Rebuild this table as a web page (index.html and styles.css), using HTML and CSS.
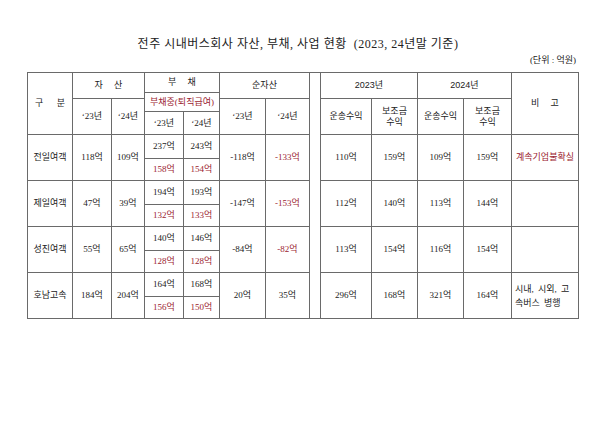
FILE: index.html
```html
<!DOCTYPE html>
<html lang="ko">
<head>
<meta charset="utf-8">
<link rel="stylesheet" href="styles.css">
</head>
<body>
<div class="page">
  <h1 class="title">전주 시내버스회사 자산, 부채, 사업 현황 &nbsp;(2023, 24년말 기준)</h1>
  <div class="unit">(단위 : 억원)</div>
  <table class="grid">
    <colgroup>
      <col class="c-name"><col class="c-a1"><col class="c-a2"><col class="c-d1"><col class="c-d2"><col class="c-n1"><col class="c-n2"><col class="c-gap"><col class="c-r1"><col class="c-s1"><col class="c-r2"><col class="c-s2"><col class="c-note">
    </colgroup>
    <tr class="h1">
      <td rowspan="4" class="spaced">구&nbsp;&nbsp;&nbsp;&nbsp;&nbsp;&nbsp;분</td>
      <td rowspan="2" colspan="2" class="spaced">자&nbsp;&nbsp;&nbsp;&nbsp;&nbsp;산</td>
      <td colspan="2" class="spaced">부&nbsp;&nbsp;&nbsp;&nbsp;&nbsp;채</td>
      <td rowspan="2" colspan="2">순자산</td>
      <td rowspan="12" class="gap"></td>
      <td rowspan="2" colspan="2" class="sans">2023년</td>
      <td rowspan="2" colspan="2" class="sans">2024년</td>
      <td rowspan="4" class="spaced">비&nbsp;&nbsp;&nbsp;&nbsp;&nbsp;고</td>
    </tr>
    <tr class="h2">
      <td rowspan="2" colspan="2" class="red">부채중(퇴직급여)</td>
    </tr>
    <tr class="h3">
      <td rowspan="2">‘23년</td>
      <td rowspan="2">‘24년</td>
      <td rowspan="2">‘23년</td>
      <td rowspan="2">‘24년</td>
      <td rowspan="2">운송수익</td>
      <td rowspan="2">보조금<br>수익</td>
      <td rowspan="2">운송수익</td>
      <td rowspan="2">보조금<br>수익</td>
    </tr>
    <tr class="h4">
      <td>‘23년</td>
      <td>‘24년</td>
    </tr>

    <tr class="top">
      <td rowspan="2">전일여객</td>
      <td rowspan="2">118억</td>
      <td rowspan="2">109억</td>
      <td>237억</td>
      <td>243억</td>
      <td rowspan="2">-118억</td>
      <td rowspan="2" class="red">-133억</td>
      <td rowspan="2">110억</td>
      <td rowspan="2">159억</td>
      <td rowspan="2">109억</td>
      <td rowspan="2">159억</td>
      <td rowspan="2" class="red">계속기업불확실</td>
    </tr>
    <tr class="bot">
      <td class="red">158억</td>
      <td class="red">154억</td>
    </tr>

    <tr class="top">
      <td rowspan="2">제일여객</td>
      <td rowspan="2">47억</td>
      <td rowspan="2">39억</td>
      <td>194억</td>
      <td>193억</td>
      <td rowspan="2">-147억</td>
      <td rowspan="2" class="red">-153억</td>
      <td rowspan="2">112억</td>
      <td rowspan="2">140억</td>
      <td rowspan="2">113억</td>
      <td rowspan="2">144억</td>
      <td rowspan="2"></td>
    </tr>
    <tr class="bot">
      <td class="red">132억</td>
      <td class="red">133억</td>
    </tr>

    <tr class="top">
      <td rowspan="2">성진여객</td>
      <td rowspan="2">55억</td>
      <td rowspan="2">65억</td>
      <td>140억</td>
      <td>146억</td>
      <td rowspan="2">-84억</td>
      <td rowspan="2" class="red">-82억</td>
      <td rowspan="2">113억</td>
      <td rowspan="2">154억</td>
      <td rowspan="2">116억</td>
      <td rowspan="2">154억</td>
      <td rowspan="2"></td>
    </tr>
    <tr class="bot">
      <td class="red">128억</td>
      <td class="red">128억</td>
    </tr>

    <tr class="top">
      <td rowspan="2">호남고속</td>
      <td rowspan="2">184억</td>
      <td rowspan="2">204억</td>
      <td>164억</td>
      <td>168억</td>
      <td rowspan="2">20억</td>
      <td rowspan="2">35억</td>
      <td rowspan="2">296억</td>
      <td rowspan="2">168억</td>
      <td rowspan="2">321억</td>
      <td rowspan="2">164억</td>
      <td rowspan="2" class="note">시내, 시외, 고<br>속버스 병행</td>
    </tr>
    <tr class="bot">
      <td class="red">156억</td>
      <td class="red">150억</td>
    </tr>
  </table>
</div>
</body>
</html>
```

FILE: styles.css
```css
html, body {
  margin: 0;
  padding: 0;
  background: #ffffff;
}

.page {
  width: 600px;
  height: 424px;
  padding-top: 37px;
  box-sizing: border-box;
  font-family: "Liberation Serif", "Noto Sans CJK KR", serif;
  color: #222222;
}

.title {
  margin: 0;
  font-size: 12px;
  letter-spacing: 0.5px;
  font-weight: normal;
  line-height: 14px;
  text-align: center;
  padding-right: 4px;
}

.unit {
  font-size: 9px;
  line-height: 12px;
  text-align: right;
  padding-right: 24px;
  margin-top: 3px;
  height: 12px;
}

.grid {
  margin-left: 27px;
  margin-top: 6px;
  border-collapse: collapse;
  table-layout: fixed;
  width: 552px;
  border: 1px solid #6a6a6a;
  font-size: 9px;
  line-height: 11px;
}

.grid td {
  border: 1px solid #6a6a6a;
  padding: 0;
  text-align: center;
  vertical-align: middle;
  white-space: nowrap;
}

.c-name { width: 45px; }
.c-a1 { width: 39px; }
.c-a2 { width: 33px; }
.c-d1 { width: 39px; }
.c-d2 { width: 36px; }
.c-n1 { width: 46px; }
.c-n2 { width: 44px; }
.c-gap { width: 11px; }
.c-r1 { width: 51px; }
.c-s1 { width: 46px; }
.c-r2 { width: 46px; }
.c-s2 { width: 48px; }
.c-note { width: 67px; }

.h1 > td { height: 19px; }
.h2 > td { height: 6px; }
.h3 > td { height: 13px; }
.h4 > td { height: 22px; }
.h1 { height: 19px; }
.h2 { height: 6px; }
.h3 { height: 13px; }
.h4 { height: 22px; }

.top > td { height: 23px; }
.bot > td { height: 21px; }
.top { height: 23px; }
.bot { height: 21px; }

.sans {
  font-family: "Liberation Sans", "Noto Sans CJK KR", sans-serif;
}

.red {
  color: #9b2330;
}

.grid td.note {
  text-align: left;
  padding-left: 3px;
  line-height: 14px;
  word-spacing: 2px;
}
```
